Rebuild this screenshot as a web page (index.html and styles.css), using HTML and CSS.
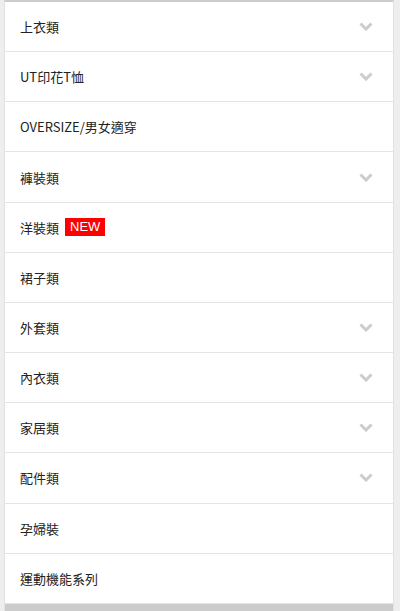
FILE: index.html
```html
<!DOCTYPE html>
<html lang="zh-Hant">
<head>
<meta charset="utf-8">
<link rel="stylesheet" href="styles.css">
</head>
<body>
<div class="frame">
  <ul class="menu">
    <li class="item"><span class="label">上衣類</span><svg class="chev" viewBox="0 0 14 9"><path d="M1.5 1.5 L7 7 L12.5 1.5"/></svg></li>
    <li class="item"><span class="label">UT印花T恤</span><svg class="chev" viewBox="0 0 14 9"><path d="M1.5 1.5 L7 7 L12.5 1.5"/></svg></li>
    <li class="item"><span class="label">OVERSIZE/男女適穿</span></li>
    <li class="item"><span class="label">褲裝類</span><svg class="chev" viewBox="0 0 14 9"><path d="M1.5 1.5 L7 7 L12.5 1.5"/></svg></li>
    <li class="item"><span class="label">洋裝類</span><span class="badge">NEW</span></li>
    <li class="item"><span class="label">裙子類</span></li>
    <li class="item"><span class="label">外套類</span><svg class="chev" viewBox="0 0 14 9"><path d="M1.5 1.5 L7 7 L12.5 1.5"/></svg></li>
    <li class="item"><span class="label">內衣類</span><svg class="chev" viewBox="0 0 14 9"><path d="M1.5 1.5 L7 7 L12.5 1.5"/></svg></li>
    <li class="item"><span class="label">家居類</span><svg class="chev" viewBox="0 0 14 9"><path d="M1.5 1.5 L7 7 L12.5 1.5"/></svg></li>
    <li class="item"><span class="label">配件類</span><svg class="chev" viewBox="0 0 14 9"><path d="M1.5 1.5 L7 7 L12.5 1.5"/></svg></li>
    <li class="item"><span class="label">孕婦裝</span></li>
    <li class="item"><span class="label">運動機能系列</span></li>
  </ul>
  <div class="footer-bar"></div>
</div>
</body>
</html>
```
FILE: styles.css
```css
html, body {
  margin: 0;
  padding: 0;
  height: 100%;
}
body {
  background: #eeeeee;
  font-family: "Noto Sans CJK TC", "Noto Sans", sans-serif;
  overflow: hidden;
}
.frame {
  margin: 0 6px 0 4px;
  background: #fff;
  border-left: 1px solid #e2e2e2;
  border-right: 1px solid #e2e2e2;
  border-top: 2px solid #cccccc;
  height: 609px;
  display: flex;
  flex-direction: column;
}
.menu {
  list-style: none;
  margin: 0;
  padding: 0;
}
.item {
  height: 49.17px;
  border-bottom: 1px solid #e4e4e4;
  display: flex;
  align-items: center;
  padding: 0 20px 0 15px;
  font-size: 13px;
  color: #222;
}
.label {
  line-height: 1;
}
.badge {
  margin-left: 6px;
  background: #ff0000;
  color: #fff;
  font-family: "Liberation Sans", Arial, sans-serif;
  font-size: 13px;
  line-height: 18px;
  padding: 0 5px;
}
.chev {
  margin-left: auto;
  width: 14px;
  height: 9px;
  fill: none;
  stroke: #cccccc;
  stroke-width: 3;
}
.footer-bar {
  flex: 1;
  background: #cccccc;
}
```
